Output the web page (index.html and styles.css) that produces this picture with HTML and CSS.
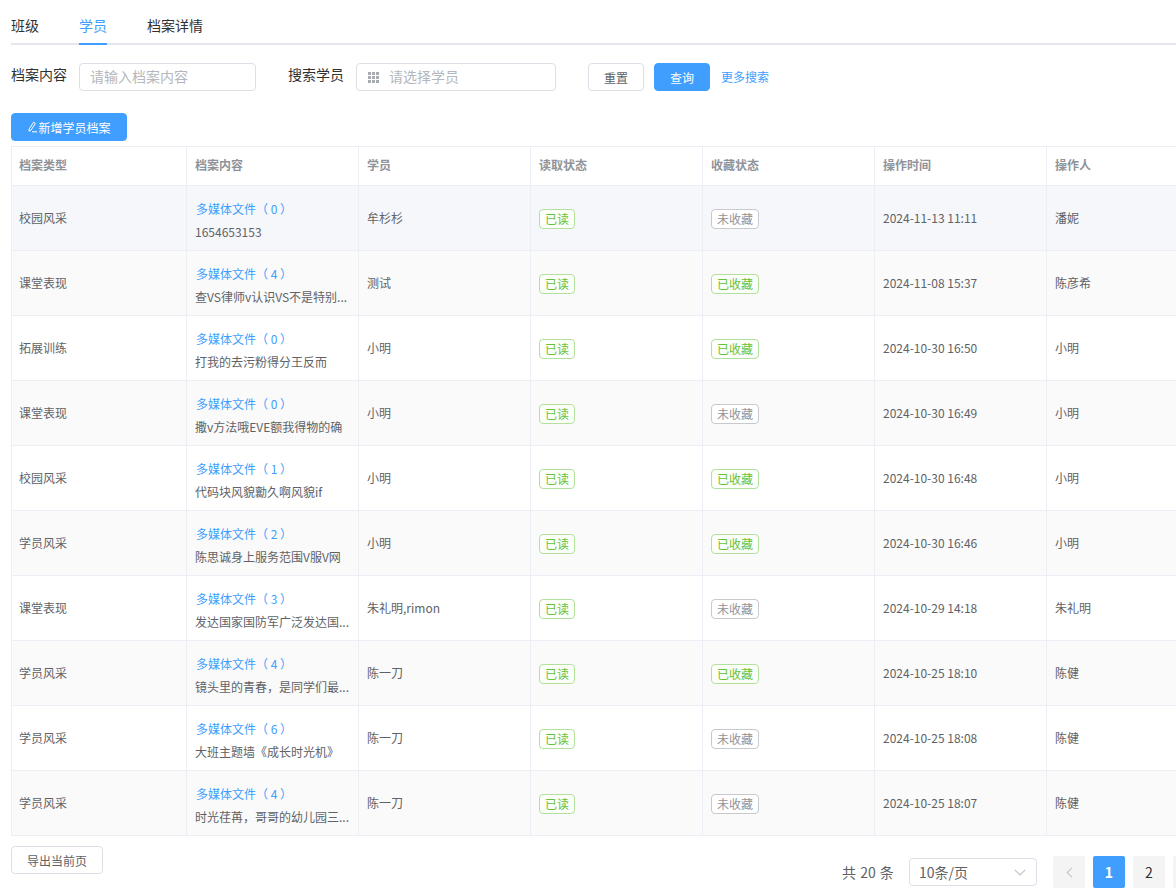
FILE: index.html
```html
<!DOCTYPE html>
<html lang="zh-CN">
<head>
<meta charset="utf-8">
<title>学员档案</title>
<link rel="stylesheet" href="styles.css">
</head>
<body>
<div class="page">
  <nav class="tabs">
    <a class="tab">班级</a>
    <a class="tab active">学员</a>
    <a class="tab">档案详情</a>
  </nav>
  <form class="filters">
    <label class="label">档案内容</label>
    <div class="input input-content"><span class="ph">请输入档案内容</span></div>
    <label class="label label-second">搜索学员</label>
    <div class="input input-student">
      <svg class="grid-icon" width="11" height="11" viewBox="0 0 11 11"><path fill="#a9abb2" d="M0 0h3v3H0zM4 0h3v3H4zM8 0h3v3H8zM0 4h3v3H0zM4 4h3v3H4zM8 4h3v3H8zM0 8h3v3H0zM4 8h3v3H4zM8 8h3v3H8z"/></svg>
      <span class="ph">请选择学员</span>
    </div>
    <button type="button" class="btn btn-reset">重置</button>
    <button type="button" class="btn btn-primary btn-query">查询</button>
    <a class="more">更多搜索</a>
  </form>
  <div class="toolbar">
    <button type="button" class="btn btn-primary btn-add">
      <svg width="11" height="12" viewBox="0 0 11 12" fill="none" stroke="#fff" stroke-width="1"><path d="M6.6 1.2 8.3 2.400 4 9.200 2 10.200 2.200 8z"/><path d="M5 10.800h5"/></svg>新增学员档案
    </button>
  </div>
  <table class="table">
    <colgroup><col class="c1"><col class="c"><col class="c"><col class="c"><col class="c"><col class="c"><col class="c"></colgroup>
    <thead>
      <tr><th>档案类型</th><th>档案内容</th><th>学员</th><th>读取状态</th><th>收藏状态</th><th>操作时间</th><th>操作人</th></tr>
    </thead>
    <tbody>
      <tr class="hover"><td>校园风采</td><td><a class="media">多媒体文件<span class="tc">（ 0 ）</span></a><p class="desc">1654653153</p></td><td>牟杉杉</td><td><span class="tag on">已读</span></td><td><span class="tag off">未收藏</span></td><td>2024-11-13 11:11</td><td>潘妮</td></tr>
      <tr class="stripe"><td>课堂表现</td><td><a class="media">多媒体文件<span class="tc">（ 4 ）</span></a><p class="desc">查VS律师v认识VS不是特别...</p></td><td>测试</td><td><span class="tag on">已读</span></td><td><span class="tag on">已收藏</span></td><td>2024-11-08 15:37</td><td>陈彦希</td></tr>
      <tr><td>拓展训练</td><td><a class="media">多媒体文件<span class="tc">（ 0 ）</span></a><p class="desc">打我的去污粉得分王反而</p></td><td>小明</td><td><span class="tag on">已读</span></td><td><span class="tag on">已收藏</span></td><td>2024-10-30 16:50</td><td>小明</td></tr>
      <tr class="stripe"><td>课堂表现</td><td><a class="media">多媒体文件<span class="tc">（ 0 ）</span></a><p class="desc">撒v方法哦EVE额我得物的确</p></td><td>小明</td><td><span class="tag on">已读</span></td><td><span class="tag off">未收藏</span></td><td>2024-10-30 16:49</td><td>小明</td></tr>
      <tr><td>校园风采</td><td><a class="media">多媒体文件<span class="tc">（ 1 ）</span></a><p class="desc">代码块风貌勷久啊风貌if</p></td><td>小明</td><td><span class="tag on">已读</span></td><td><span class="tag on">已收藏</span></td><td>2024-10-30 16:48</td><td>小明</td></tr>
      <tr class="stripe"><td>学员风采</td><td><a class="media">多媒体文件<span class="tc">（ 2 ）</span></a><p class="desc">陈思诚身上服务范围V服V网</p></td><td>小明</td><td><span class="tag on">已读</span></td><td><span class="tag on">已收藏</span></td><td>2024-10-30 16:46</td><td>小明</td></tr>
      <tr><td>课堂表现</td><td><a class="media">多媒体文件<span class="tc">（ 3 ）</span></a><p class="desc">发达国家国防军广泛发达国...</p></td><td>朱礼明,rimon</td><td><span class="tag on">已读</span></td><td><span class="tag off">未收藏</span></td><td>2024-10-29 14:18</td><td>朱礼明</td></tr>
      <tr class="stripe"><td>学员风采</td><td><a class="media">多媒体文件<span class="tc">（ 4 ）</span></a><p class="desc">镜头里的青春<span class="tc">，</span>是同学们最...</p></td><td>陈一刀</td><td><span class="tag on">已读</span></td><td><span class="tag on">已收藏</span></td><td>2024-10-25 18:10</td><td>陈健</td></tr>
      <tr><td>学员风采</td><td><a class="media">多媒体文件<span class="tc">（ 6 ）</span></a><p class="desc">大班主题墙《成长时光机》</p></td><td>陈一刀</td><td><span class="tag on">已读</span></td><td><span class="tag off">未收藏</span></td><td>2024-10-25 18:08</td><td>陈健</td></tr>
      <tr class="stripe"><td>学员风采</td><td><a class="media">多媒体文件<span class="tc">（ 4 ）</span></a><p class="desc">时光荏苒<span class="tc">，</span>哥哥的幼儿园三...</p></td><td>陈一刀</td><td><span class="tag on">已读</span></td><td><span class="tag off">未收藏</span></td><td>2024-10-25 18:07</td><td>陈健</td></tr>
    </tbody>
  </table>
  <footer class="footer">
    <button type="button" class="btn btn-export">导出当前页</button>
    <div class="pager">
      <span class="total">共 20 条</span>
      <div class="size"><span>10条/页</span>
        <svg width="12" height="7" viewBox="0 0 12 7" fill="none" stroke="#c0c4cc" stroke-width="1.2"><path d="M.8.8 6 6l5.200-5.200"/></svg>
      </div>
      <span class="pg prev"><svg width="7" height="11" viewBox="0 0 7 11" fill="none" stroke="#c0c4cc" stroke-width="1.1"><path d="M6 .8 1.200 5.500 6 10.200"/></svg></span>
      <span class="pg current">1</span>
      <span class="pg">2</span>
      <span class="pg"></span>
    </div>
  </footer>
</div>
</body>
</html>
```
FILE: styles.css
```css
* { box-sizing: border-box; }
html, body { margin: 0; height: 891px; overflow: hidden; background: #fff; }
body {
  font-family: "Noto Sans CJK SC", "Noto Sans", sans-serif;
  font-size: 12px;
  color: #606266;
}
.page { width: 1240px; padding: 0 0 0 11px; }

.tabs {
  display: flex;
  gap: 40px;
  height: 45px;
  width: 1165px;
  border-bottom: 2px solid #e4e7ed;
}
.tab {
  height: 45px;
  padding-top: 15px;
  line-height: 20px;
  font-size: 14px;
  color: #303133;
}
.tab.active { color: #409eff; border-bottom: 2px solid #409eff; }

.filters {
  display: flex;
  align-items: flex-start;
  margin-top: 18px;
  height: 28px;
}
.label { font-size: 14px; line-height: 22px; color: #303133; width: 68px; }
.label-second { margin-left: 32px; }
.input {
  display: flex;
  align-items: center;
  height: 28px;
  border: 1px solid #dcdfe6;
  border-radius: 4px;
  padding: 0 0 2px 10px;
  background: #fff;
}
.input-content { width: 177px; }
.input-student { width: 200px; padding-left: 11px; }
.ph { font-size: 14px; color: #b4b7bd; }
.grid-icon { margin-right: 10px; margin-top: 2px; }
.btn {
  font-family: inherit;
  font-size: 12px;
  border-radius: 4px;
  border: 1px solid #dcdfe6;
  background: #fff;
  color: #606266;
  padding: 0;
  height: 28px;
}
.btn-primary { background: #409eff; border-color: #409eff; color: #fff; }
.btn-reset { width: 56px; margin-left: 32px; }
.btn-query { width: 56px; margin-left: 10px; }
.more { margin-left: 11px; line-height: 28px; color: #409eff; }

.toolbar { margin-top: 22px; height: 33px; }
.btn-add {
  width: 116px;
  display: inline-flex;
  align-items: center;
  justify-content: center;
}

.table {
  border-collapse: collapse;
  table-layout: fixed;
  width: 1207px;
}
.c1 { width: 175px; }
.c { width: 172px; }
th, td {
  border: 1px solid #ebeef5;
  padding: 0 0 2px 8px;
  text-align: left;
  font-size: 12px;
  overflow: hidden;
}
th:first-child, td:first-child { padding-left: 7px; }
thead tr { height: 39px; }
th { color: #909399; font-weight: 700; padding-bottom: 3px; }
tbody tr { height: 65px; color: #606266; }
tbody tr.stripe { background: #fafafa; }
tbody tr.hover { background: #f5f7fa; }
.media { display: block; line-height: 16px; color: #409eff; margin: 7px 0 0 1px; white-space: nowrap; }
.tc { font-family: "Noto Sans CJK TC", sans-serif; }
.desc {
  margin: 7px 0 0;
  line-height: 16px;
  white-space: nowrap;
}
.tag {
  display: inline-block;
  height: 20px;
  line-height: 18px;
  margin-top: 4px;
  padding: 0 5px;
  border: 1px solid;
  border-radius: 4px;
  background: #fff;
  vertical-align: middle;
}
.tag.on { color: #67c23a; border-color: #b3e19d; background: #fbfef9; }
.tag.off { color: #909399; border-color: #c8c9cc; }

.footer {
  display: flex;
  align-items: flex-start;
  margin-top: 10px;
}
.btn-export { width: 92px; height: 28px; }
.pager {
  display: flex;
  align-items: center;
  margin-left: 739px;
  margin-top: 10px;
  gap: 8px;
  font-size: 14px;
  white-space: nowrap;
}
.total { width: 59px; color: #606266; word-spacing: 1px; }
.size {
  display: flex;
  align-items: center;
  justify-content: space-between;
  width: 128px;
  height: 28px;
  margin-right: 8px;
  padding: 0 10px 0 9px;
  border: 1px solid #dcdfe6;
  border-radius: 4px;
  color: #606266;
}
.pg {
  display: flex;
  align-items: center;
  justify-content: center;
  width: 32px;
  height: 32px;
  border-radius: 2px;
  background: #f4f4f5;
  color: #303133;
}
.pg.current { background: #409eff; color: #fff; font-weight: 700; }
```
